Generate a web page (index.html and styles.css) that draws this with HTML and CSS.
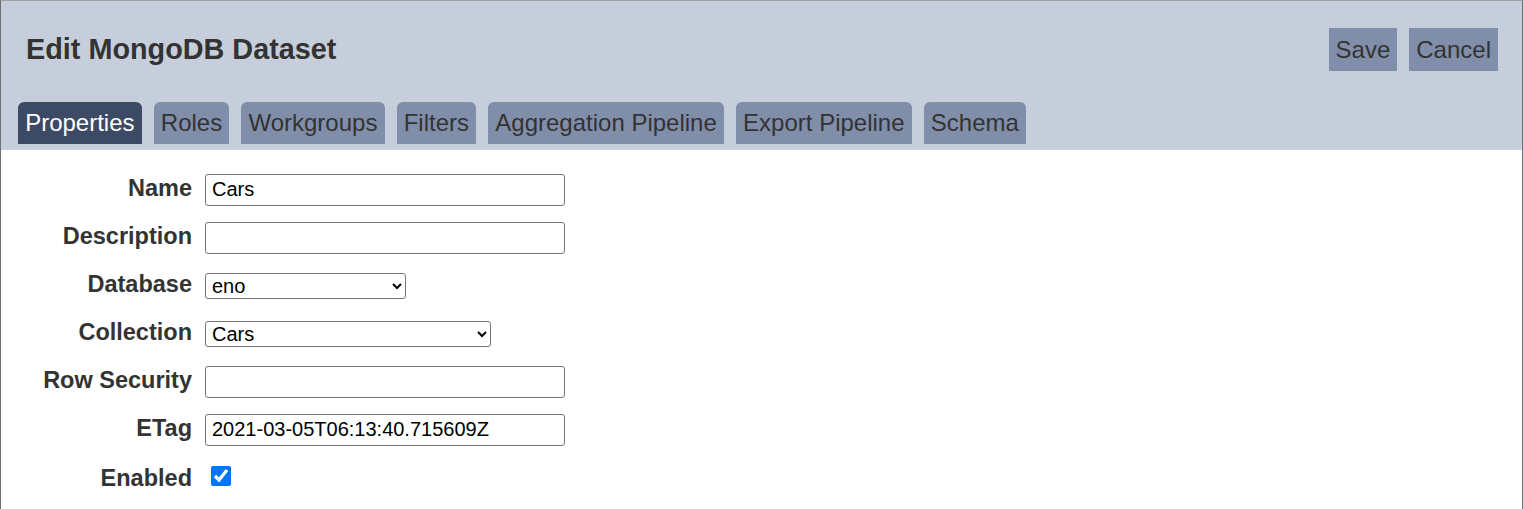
FILE: index.html
```html
<!DOCTYPE html>
<html lang="en">
<head>
    <meta charset="UTF-8">
    <meta name="viewport" content="width=device-width, initial-scale=1.0">
    <title>Edit MongoDB Dataset</title>
    <link rel="stylesheet" href="styles.css">
</head>
<body>
    <div class="frame">
        <!-- Header with title, actions and tabs -->
        <div class="header">
            <div class="header-row">
                <h1>Edit MongoDB Dataset</h1>
                <div class="actions">
                    <button class="btn">Save</button>
                    <button class="btn">Cancel</button>
                </div>
            </div>
            <div class="tabs">
                <div class="tab active">Properties</div>
                <div class="tab">Roles</div>
                <div class="tab">Workgroups</div>
                <div class="tab">Filters</div>
                <div class="tab">Aggregation Pipeline</div>
                <div class="tab">Export Pipeline</div>
                <div class="tab">Schema</div>
            </div>
        </div>

        <!-- Properties form -->
        <div class="form">
            <label for="name">Name</label>
            <input type="text" id="name" value="Cars">

            <label for="description">Description</label>
            <input type="text" id="description" value="">

            <label for="database">Database</label>
            <select id="database" class="select-db">
                <option>eno</option>
            </select>

            <label for="collection">Collection</label>
            <select id="collection" class="select-coll">
                <option>Cars</option>
            </select>

            <label for="rowsecurity">Row Security</label>
            <input type="text" id="rowsecurity" value="">

            <label for="etag">ETag</label>
            <input type="text" id="etag" value="2021-03-05T06:13:40.715609Z">

            <label for="enabled" class="label-check">Enabled</label>
            <div><input type="checkbox" id="enabled" checked></div>
        </div>
    </div>
</body>
</html>
```

FILE: styles.css
```css
* { box-sizing: border-box; }
html, body {
    margin: 0;
    padding: 0;
    height: 100%;
}
body {
    font-family: "Liberation Sans", Arial, sans-serif;
    color: #333;
    background-color: #fff;
}
.frame {
    min-height: 100vh;
    border-top: 1px solid #a0a0a0;
    border-left: 1px solid #707070;
    border-right: 1px solid #707070;
}
.header {
    background-color: #c6cedb;
    padding: 27px 24px 6px 17px;
}
.header-row {
    display: flex;
    justify-content: space-between;
    align-items: center;
    height: 43px;
    padding-left: 8px;
}
h1 {
    margin: 0;
    font-size: 28.8px;
    font-weight: bold;
    color: #333;
}
.actions {
    display: flex;
    gap: 12px;
}
.btn {
    height: 43px;
    padding: 0 7px;
    border: none;
    border-radius: 0;
    background-color: #808eaa;
    color: #333;
    font-family: "Liberation Sans", Arial, sans-serif;
    font-size: 24px;
    cursor: pointer;
}
.tabs {
    display: flex;
    gap: 12px;
    margin-top: 31px;
}
.tab {
    height: 42px;
    line-height: 42px;
    padding: 0 7.15px;
    border-radius: 6px 6px 0 0;
    background-color: #808eaa;
    color: #333;
    font-size: 24px;
    cursor: pointer;
}
.tab.active {
    background-color: #3d4a66;
    color: #fff;
}
.form {
    display: grid;
    grid-template-columns: 191px auto;
    grid-auto-rows: 32px;
    row-gap: 16px;
    column-gap: 13px;
    align-items: center;
    justify-items: start;
    padding-top: 24px;
}
.form label {
    justify-self: end;
    margin-bottom: 4px;
    font-size: 23.5px;
    font-weight: bold;
    color: #333;
}
.form .label-check {
    margin-bottom: 0;
}
.form input[type="text"] {
    width: 360px;
    height: 32px;
    padding: 0 6px 2px;
    border: 1px solid #767676;
    border-radius: 3px;
    font-family: "Liberation Sans", Arial, sans-serif;
    font-size: 20px;
    color: #000;
}
.form select {
    height: 26px;
    padding: 0 2px 1px;
    border: 1px solid #767676;
    border-radius: 3px;
    background-color: #fff;
    font-family: "Liberation Sans", Arial, sans-serif;
    font-size: 20px;
    color: #000;
}
.select-db { width: 201px; }
.select-coll { width: 286px; }
.form input[type="checkbox"] {
    width: 20px;
    height: 20px;
    margin: 0 0 0 6px;
}
```
